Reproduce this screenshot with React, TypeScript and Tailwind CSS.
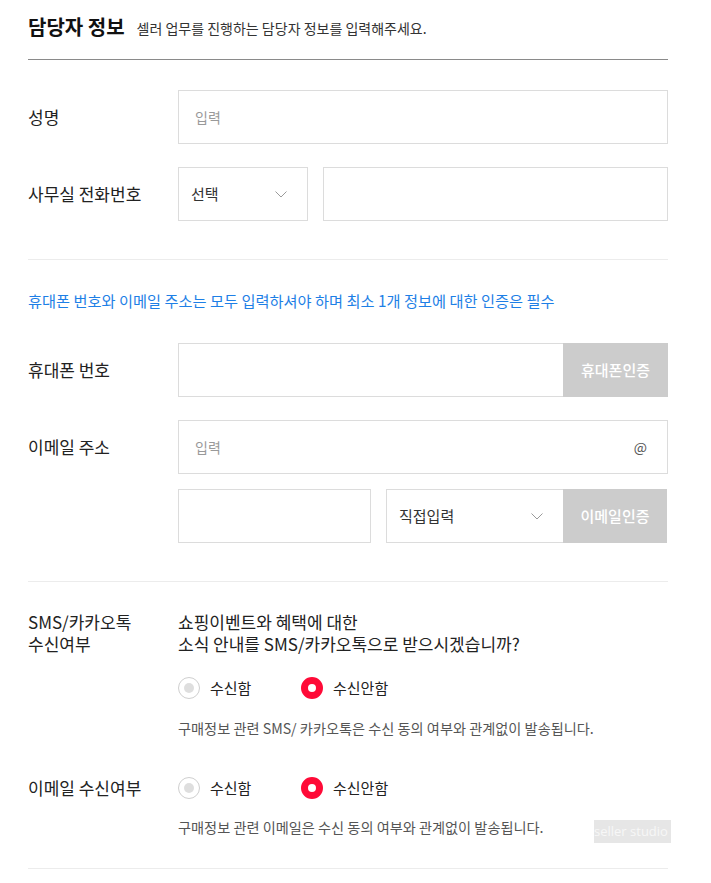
import React from "react";

const font = { fontFamily: '"Noto Sans CJK KR", "Noto Sans", sans-serif' };

const Chevron = () => (
	<svg width="12" height="7" viewBox="0 0 12 7" fill="none">
		<path d="M0.5 0.5 L6 6 L11.5 0.5" stroke="#9a9a9a" strokeWidth="1" />
	</svg>
);

const Radio = ({ checked, label }: { checked: boolean; label: string }) => (
	<div className="flex items-center gap-[10px] w-[123px]">
		{checked ? (
			<span className="w-[22px] h-[22px] rounded-full border-[7px] border-[#ff0a37] bg-white" />
		) : (
			<span className="w-[22px] h-[22px] rounded-full border border-[#cfcfcf] bg-white flex items-center justify-center">
				<span className="w-[10px] h-[10px] rounded-full bg-[#dedede]" />
			</span>
		)}
		<span className="text-[15px] text-[#222]">{label}</span>
	</div>
);

const Label = ({ children }: { children: React.ReactNode }) => (
	<div className="w-[150px] shrink-0 text-[17px] text-[#222] leading-[22px]">{children}</div>
);

const App = () => {
	return (
		<div className="relative w-[711px] h-[883px] bg-white px-[28px] pt-[13px]" style={font}>
			{/* HEADER */}
			<div className="w-[640px] h-[28px] flex items-center gap-[12px]">
				<h1 className="text-[20px] font-bold text-[#111]">담당자 정보</h1>
				<span className="text-[14px] text-[#333] mt-[2px]">셀러 업무를 진행하는 담당자 정보를 입력해주세요.</span>
			</div>
			<div className="w-[640px] mt-[18px] border-t border-[#8a8a8a]" />

			{/* NAME */}
			<div className="w-[640px] mt-[30px] flex items-center">
				<Label>성명</Label>
				<div className="flex-1 h-[54px] border border-[#dcdcdc] flex items-center px-[16px] text-[14px] text-[#999]">입력</div>
			</div>

			{/* OFFICE PHONE */}
			<div className="w-[640px] mt-[23px] flex items-center">
				<Label>사무실 전화번호</Label>
				<div className="w-[130px] h-[54px] border border-[#dcdcdc] flex items-center justify-between pl-[12px] pr-[20px] text-[15px] text-[#333]">
					<span>선택</span>
					<Chevron />
				</div>
				<div className="w-[345px] ml-[15px] h-[54px] border border-[#dcdcdc]" />
			</div>

			<div className="w-[640px] mt-[38px] border-t border-[#ececec]" />

			<p className="mt-[30px] text-[15.25px] leading-[20px] text-[#1e7fe6]">
				휴대폰 번호와 이메일 주소는 모두 입력하셔야 하며 최소 1개 정보에 대한 인증은 필수
			</p>

			{/* MOBILE */}
			<div className="w-[640px] mt-[33px] flex items-center">
				<Label>휴대폰 번호</Label>
				<div className="flex-1 h-[54px] border border-[#dcdcdc] border-r-0" />
				<button className="w-[105px] h-[54px] bg-[#cccccc] text-white text-[15px] font-medium">휴대폰인증</button>
			</div>

			{/* EMAIL */}
			<div className="w-[640px] mt-[23px] flex items-center">
				<Label>이메일 주소</Label>
				<div className="flex-1 h-[54px] border border-[#dcdcdc] flex items-center justify-between pl-[16px] pr-[20px] text-[14px]">
					<span className="text-[#999]">입력</span>
					<span className="text-[#555]">@</span>
				</div>
			</div>
			<div className="w-[640px] mt-[15px] flex items-center">
				<div className="w-[150px] shrink-0" />
				<div className="w-[193px] h-[54px] border border-[#dcdcdc]" />
				<div className="w-[177px] ml-[15px] h-[54px] border border-[#dcdcdc] border-r-0 flex items-center justify-between pl-[12px] pr-[20px] text-[15px] text-[#333]">
					<span>직접입력</span>
					<Chevron />
				</div>
				<button className="w-[104px] h-[54px] bg-[#cccccc] text-white text-[15px] font-medium">이메일인증</button>
			</div>

			<div className="w-[640px] mt-[38px] border-t border-[#ececec]" />

			{/* SMS */}
			<div className="w-[640px] mt-[29px] flex">
				<Label>
					<div>SMS/카카오톡</div>
					<div>수신여부</div>
				</Label>
				<div className="flex flex-col">
					<div className="text-[17px] leading-[22px] text-[#222]">
						<div>쇼핑이벤트와 혜택에 대한</div>
						<div>소식 안내를 SMS/카카오톡으로 받으시겠습니까?</div>
					</div>
					<div className="mt-[22px] flex items-center">
						<Radio checked={false} label="수신함" />
						<Radio checked={true} label="수신안함" />
					</div>
					<p className="mt-[19px] text-[14.2px] leading-[18px] text-[#555]">
						구매정보 관련 SMS/ 카카오톡은 수신 동의 여부와 관계없이 발송됩니다.
					</p>
				</div>
			</div>

			{/* EMAIL RECEIVE */}
			<div className="w-[640px] mt-[40px] flex items-center">
				<Label>이메일 수신여부</Label>
				<div className="flex items-center">
					<Radio checked={false} label="수신함" />
					<Radio checked={true} label="수신안함" />
				</div>
			</div>
			<div className="w-[640px] mt-[19px] flex">
				<div className="w-[150px] shrink-0" />
				<p className="text-[14.2px] leading-[18px] text-[#555]">구매정보 관련 이메일은 수신 동의 여부와 관계없이 발송됩니다.</p>
			</div>

			<div className="w-[640px] mt-[32px] border-t border-[#ececec]" />

			{/* WATERMARK */}
			<div
				className="absolute left-[594px] top-[820px] w-[77px] h-[23px] bg-[#e6e6e6] text-[#f7f7f7] text-[13px] leading-[23px] whitespace-nowrap"
				style={{ fontFamily: '"Open Sans", sans-serif' }}
			>
				seller studio
			</div>
		</div>
	);
};

export default App;
